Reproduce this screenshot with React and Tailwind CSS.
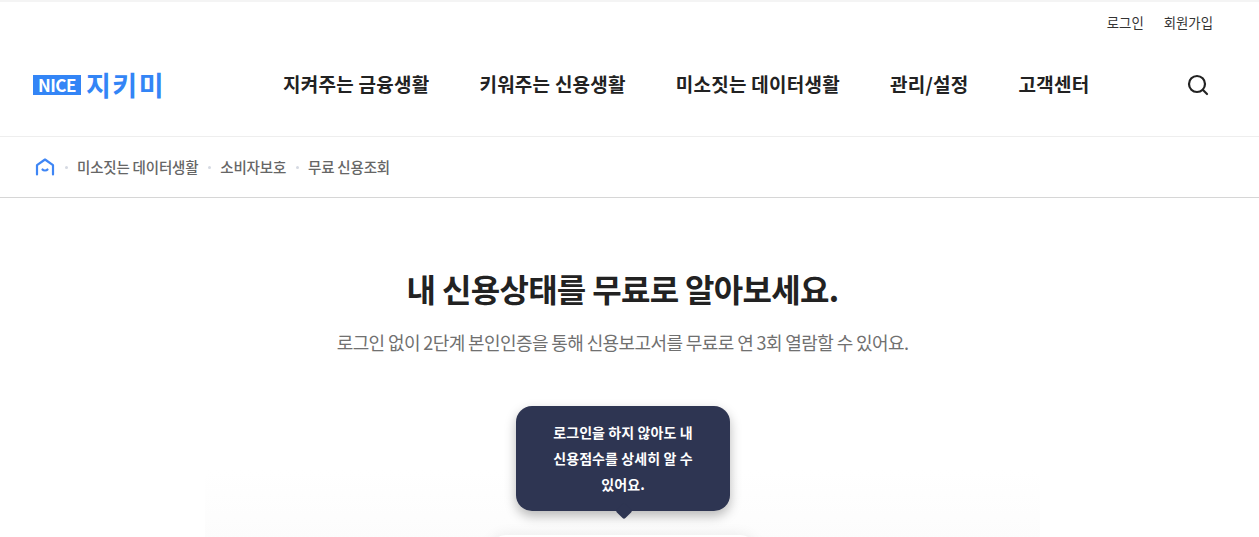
import React from 'react';

const NAV_ITEMS = ['지켜주는 금융생활', '키워주는 신용생활', '미소짓는 데이터생활', '관리/설정', '고객센터'];
const CRUMBS = ['미소짓는 데이터생활', '소비자보호', '무료 신용조회'];

function Logo() {
  return (
    <div className="flex w-[132px] items-center gap-[5px]">
      <span className="flex h-[20px] w-[48px] shrink-0 items-center justify-center bg-[#3385f6] text-[17px] font-bold leading-none tracking-[-0.5px] text-white">
        NICE
      </span>
      <span className="shrink-0 whitespace-nowrap text-[27px] font-semibold leading-none tracking-[1.5px] text-[#3385f6]">지키미</span>
    </div>
  );
}

function HomeIcon() {
  return (
    <svg width="20" height="18" viewBox="0 0 20 18" fill="none" stroke="#3f86f5" strokeWidth="2.2" strokeLinecap="round" strokeLinejoin="round">
      <path d="M2 16.5V7.2L10 1.5L18 7.2V16.5" />
      <path d="M7.5 11.5C8.5 12.8 11.5 12.8 12.5 11.5" />
    </svg>
  );
}

function SearchIcon() {
  return (
    <svg width="22" height="22" viewBox="0 0 22 22" fill="none" stroke="#222222" strokeWidth="2.2" strokeLinecap="round">
      <circle cx="10" cy="10" r="8" />
      <path d="M16 16L20 20" />
    </svg>
  );
}

function Header() {
  return (
    <header className="border-b border-[#eeeeee]">
      <div className="flex h-[40px] items-center justify-end gap-[20px] pr-[46px] text-[13.4px] text-[#333333]">
        <span>로그인</span>
        <span>회원가입</span>
      </div>
      <div className="flex h-[94px] items-center pb-[9px] pl-[33px] pr-[50px]">
        <Logo />
        <nav className="ml-[118px] flex gap-[50px] text-[19px] font-semibold tracking-[0.25px] text-[#222222]">
          {NAV_ITEMS.map(item => (
            <span key={item}>{item}</span>
          ))}
        </nav>
        <div className="ml-auto">
          <SearchIcon />
        </div>
      </div>
    </header>
  );
}

function Breadcrumb() {
  return (
    <div className="flex h-[61px] items-center border-b border-[#d6d6d6] pl-[35px] text-[14.5px] font-medium tracking-[-0.2px] text-[#666666]">
      <HomeIcon />
      {CRUMBS.map(crumb => (
        <React.Fragment key={crumb}>
          <span className="mx-[9.5px] h-[3px] w-[3px] rounded-full bg-[#d5d9e2]" />
          <span>{crumb}</span>
        </React.Fragment>
      ))}
    </div>
  );
}

function Tooltip() {
  return (
    <div className="absolute left-[516px] top-[-64px] z-10 w-[214px] rounded-[16px] bg-[#2e3552] px-[30px] pb-[14px] pt-[13px] text-center text-[14px] font-semibold leading-[26px] tracking-[0.1px] text-white [word-break:keep-all] shadow-[0_5px_12px_rgba(0,0,0,0.28)]">
      로그인을 하지 않아도 내 신용점수를 상세히 알 수 있어요.
      <span className="absolute bottom-[-6px] left-[102px] h-[12px] w-[12px] rotate-45 rounded-[2px] bg-[#2e3552]" />
    </div>
  );
}

export default function App() {
  return (
    <div className="h-screen overflow-hidden border-t-2 border-[#f4f4f4] bg-white font-['Noto_Sans_CJK_KR',sans-serif]">
      <Header />
      <Breadcrumb />
      <section className="pr-[14px] pt-[65px] text-center">
        <h1 className="text-[32px] font-bold leading-[50px] tracking-[-0.7px] text-[#222222]">내 신용상태를 무료로 알아보세요.</h1>
        <p className="mt-[15px] text-[18px] leading-[28px] tracking-[-0.6px] text-[#707070]">
          로그인 없이 2단계 본인인증을 통해 신용보고서를 무료로 연 3회 열람할 수 있어요.
        </p>
      </section>
      <section className="relative mt-[114px]">
        <Tooltip />
        <div className="ml-[205px] mr-[219px] h-[70px] bg-linear-to-b from-white to-[#fcfcfc] pt-[65px]">
          <div className="mx-auto h-[20px] w-[266px] rounded-t-[16px] bg-white shadow-[0_0_14px_rgba(0,0,0,0.08)]" />
        </div>
      </section>
    </div>
  );
}
